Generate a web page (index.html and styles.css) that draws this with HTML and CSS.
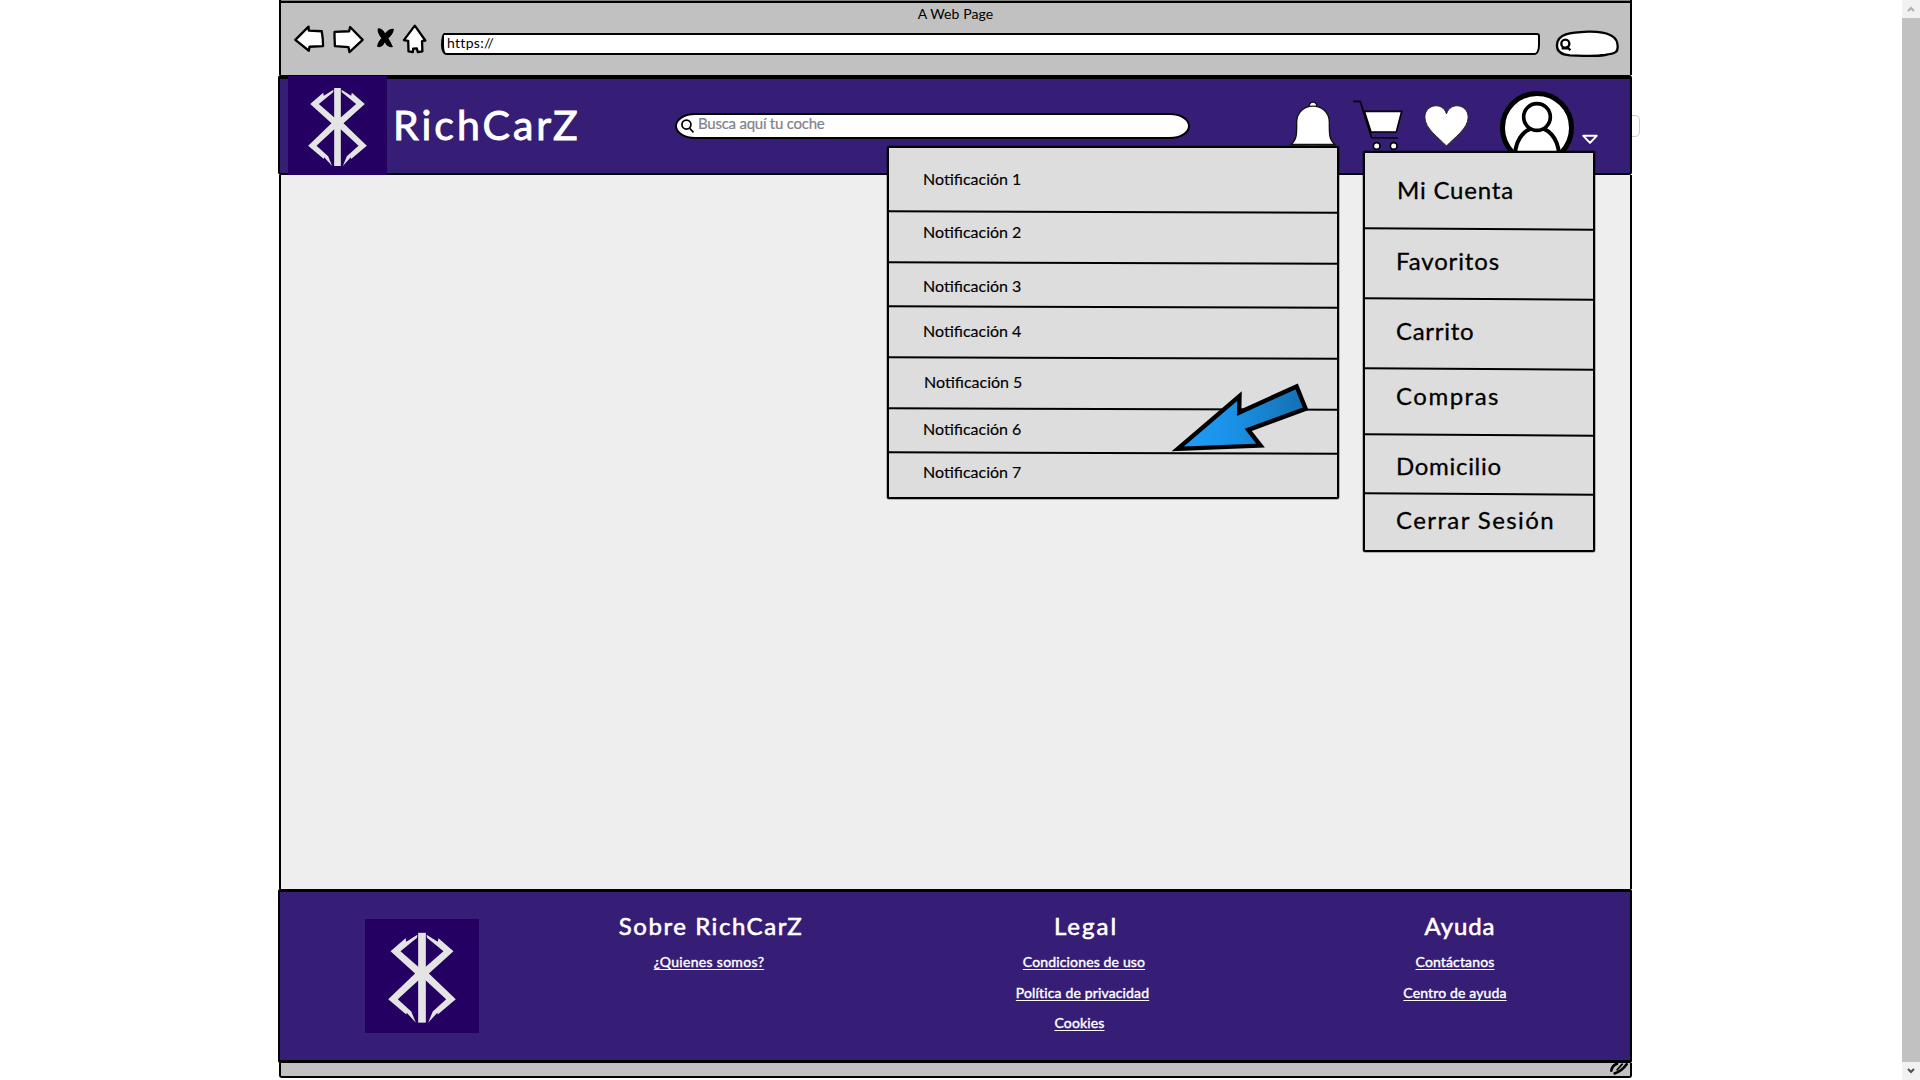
FILE: index.html
```html
<!DOCTYPE html>
<html lang="es">
<head>
<meta charset="utf-8">
<title>RichCarZ</title>
<link rel="stylesheet" href="styles.css">
</head>
<body>
<svg width="0" height="0" class="defs">
  <symbol id="rune" viewBox="24 18 296 297">
    <g fill="#e4e4e4">
      <rect x="162" y="54" width="20" height="234"/>
      <path d="M160 59L131 77L129 68L90 102L154 160L84 227L131 267L132 262L156 288L144 259L109 227L172 169V151L116 102L159 67Z"/>
      <path d="M160 59L131 77L129 68L90 102L154 160L84 227L131 267L132 262L156 288L144 259L109 227L172 169V151L116 102L159 67Z" transform="matrix(-1 0 0 1 344 0)"/>
    </g>
  </symbol>
</svg>
<div class="page">
  <div class="window">
    <div class="chrome">
      <div class="window-title">A Web Page</div>
      <div class="toolbar">
        <svg class="nav-icons" viewBox="0 0 405 100">
          <g fill="#fff" stroke="#000" stroke-width="7" stroke-linejoin="round">
            <path d="M2 48L42 8L43 20L82 22Q86 43 86 67L45 69L43 81Z"/>
            <path d="M121 24Q120 27 122 67L163 70L166 85L206 48L168 9L165 22Z"/>
            <path d="M364 5L331 49L344 51L345 83L358 85L359 75L370 74L373 85L387 83L386 52L396 50Z"/>
          </g>
          <path d="M252 13Q265 12 274 28Q287 13 301 15Q298 32 284 43Q291 54 298 70Q282 73 273 56Q264 74 250 69Q250 55 263 43Q249 27 252 13Z"/>
        </svg>
        <div class="url-bar">https://</div>
        <svg class="pill" viewBox="0 0 195 84">
          <path d="M6 45C7 12 45 7 100 5C165 4 188 22 188 48C189 68 180 70 150 75C115 80 80 77 45 76C20 74 5 65 6 45Z" fill="#fff" stroke="#000" stroke-width="7"/>
          <circle cx="31" cy="41" r="12" fill="none" stroke="#000" stroke-width="7"/>
          <path d="M35 49L46 61M20 55L40 55" stroke="#000" stroke-width="7"/>
        </svg>
      </div>
    </div>
    <header class="header">
      <div class="logo"><svg><use href="#rune"/></svg></div>
      <div class="brand">RichCarZ</div>
      <div class="search">
        <svg viewBox="0 0 12 14"><circle cx="5" cy="5.2" r="4.2"/><path d="M8 8.600L11.600 12.600"/></svg>
        <span>Busca aquí tu coche</span>
      </div>
      <div class="actions">
        <svg class="bell" viewBox="0 0 138 144">
          <path d="M54 134H84V146H54Z" fill="#aaa" stroke="#222" stroke-width="2"/>
          <path d="M57 20C57 -2 81 -2 81 20Z" fill="#fff" stroke="#111" stroke-width="4"/>
          <path d="M3 130C22 116 20 94 20 64C20 -1 118 -1 118 64C118 94 116 116 135 130Z" fill="#fff" stroke="#111" stroke-width="4"/>
        </svg>
        <svg class="cart" viewBox="0 0 150 150" fill="none" stroke="#000" stroke-width="5">
          <path d="M34 34H146L130 96H54Z" fill="#fff"/>
          <path d="M1 4L22 5L56 113L135 114" stroke-linejoin="round"/>
          <circle cx="71" cy="138" r="10" fill="#fff"/><circle cx="122" cy="138" r="10" fill="#fff"/>
        </svg>
        <svg class="heart" viewBox="0 0 136 128">
          <path d="M68 125C45 100 2 72 2 37C2 -2 56 -12 68 27C80 -12 134 -2 134 37C134 72 91 100 68 125Z" fill="#fff" stroke="#222" stroke-width="3"/>
        </svg>
        <svg class="avatar" viewBox="0 0 222 222">
          <circle cx="111" cy="111" r="104" fill="#fff"/>
          <path d="M45 190C52 84 170 84 177 190V215H45Z" fill="#fff" stroke="#000" stroke-width="12"/>
          <circle cx="111" cy="78" r="40" fill="#fff" stroke="#000" stroke-width="11"/>
          <circle cx="111" cy="111" r="103.500" fill="none" stroke="#000" stroke-width="15"/>
        </svg>
        <svg class="caret" viewBox="0 0 48 32"><path d="M4 5H44L24 26Z" fill="none" stroke="#fff" stroke-width="6" stroke-linejoin="round"/></svg>
      </div>
    </header>
    <main class="content"></main>
    <footer class="footer">
      <div class="footer-logo"><svg><use href="#rune"/></svg></div>
      <section class="col about">
        <h2>Sobre RichCarZ</h2>
        <a>¿Quienes somos?</a>
      </section>
      <section class="col legal">
        <h2>Legal</h2>
        <a>Condiciones de uso</a>
        <a class="privacy">Política de privacidad</a>
        <a class="cookies">Cookies</a>
      </section>
      <section class="col help">
        <h2>Ayuda</h2>
        <a>Contáctanos</a>
        <a>Centro de ayuda</a>
      </section>
    </footer>
    <div class="status">
      <svg viewBox="0 0 60 36"><path d="M4 23Q6 8 21 2M14 31Q34 26 50 4" fill="none" stroke="#000" stroke-width="8" stroke-linecap="round"/><path d="M20 22L38 2" stroke="#000" stroke-width="5"/></svg>
    </div>
    <div class="edge-tag"></div>
    <ul class="dropdown notifications">
      <li>Notificación 1</li>
      <li>Notificación 2</li>
      <li>Notificación 3</li>
      <li>Notificación 4</li>
      <li>Notificación 5</li>
      <li>Notificación 6</li>
      <li>Notificación 7</li>
    </ul>
    <ul class="dropdown account">
      <li>Mi Cuenta</li>
      <li>Favoritos</li>
      <li>Carrito</li>
      <li>Compras</li>
      <li>Domicilio</li>
      <li>Cerrar Sesión</li>
    </ul>
    <svg class="pointer" viewBox="0 0 410 206">
      <defs><linearGradient id="blue" x1="0" y1="0" x2="1" y2="0"><stop offset="0.100" stop-color="#1e9bf5"/><stop offset="0.450" stop-color="#1a90e5"/><stop offset="1" stop-color="#146fb0"/></linearGradient></defs>
      <path d="M20 197L205 39L204 88L376 10L403 77L231 140L268 187Z" fill="url(#blue)" stroke="#000" stroke-width="13"/>
    </svg>
  </div>
  <div class="scrollbar">
    <div class="sb-btn"><svg viewBox="0 0 8 6"><path d="M1 5L4 2L7 5" stroke="#b0b0b0"/></svg></div>
    <div class="sb-thumb"></div>
    <div class="sb-btn"><svg viewBox="0 0 8 6"><path d="M1 1L4 4L7 1" stroke="#505050"/></svg></div>
  </div>
</div>
</body>
</html>
```
FILE: styles.css
```css
* { box-sizing: border-box; }
body { margin: 0; background: #fff; color: #000; font-family: Lato, "Open Sans", sans-serif; overflow: hidden; }
svg { display: block; }
.defs { position: absolute; }
.page { height: 1080px; display: flex; justify-content: flex-end; }

.window { position: relative; width: 1354px; height: 1080px; margin-right: 270px; display: flex; flex-direction: column; white-space: nowrap; }
.chrome { height: 75px; margin-left: 1px; background: #c1c1c1; border: 2px solid #000; border-top: 0; border-bottom: 0; box-shadow: inset 0 1px #808580, inset 0 3px #000; padding-top: 3px; }
.window-title { height: 21px; text-align: center; font-size: 14px; line-height: 22px; letter-spacing: 0.100px; }
.toolbar { display: flex; align-items: flex-start; padding-left: 13px; }
.nav-icons { width: 135px; height: 33px; overflow: visible; }
.url-bar { width: 1099px; height: 22px; margin: 9px 0 0 12px; background: #fff; border: 2px solid #000; border-left-width: 3px; border-radius: 3px 3px 5px 5px / 12px 3px 10px 10px; font-size: 14px; line-height: 16px; padding-left: 3px; letter-spacing: 0.300px; }
.pill { width: 65px; height: 28px; margin: 6px 0 0 15px; }

.header { height: 100px; background: #361d75; border: 2px solid #000; border-top-width: 4px; border-radius: 3px; display: flex; }
.logo { width: 99px; height: 99px; margin: -3px 0 0 8px; background: #240062; }
.logo svg, .footer-logo svg { width: 100%; height: 100%; }
.brand { width: 280px; padding: 21px 0 0 6px; color: #fff; font-size: 41px; line-height: 50px; letter-spacing: 3.050px; -webkit-text-stroke: 0.900px #fff; }
.search { width: 515px; height: 26px; margin-top: 34px; margin-left: 8px; background: #fff; border: 2px solid #000; border-radius: 20px / 13px; display: flex; font-size: 15px; line-height: 17px; letter-spacing: -0.240px; color: #80828c; }
.search span { -webkit-text-stroke: 0.200px #80828c; }
.search svg { width: 13px; height: 15px; margin: 4px 4px 0 4px; fill: none; stroke: #000; stroke-width: 1.600; }
.actions { display: flex; margin-left: 100px; }
.bell { width: 46px; height: 48px; margin-top: 22px; }
.cart { width: 50px; height: 50px; margin: 21px 0 0 17px; }
.heart { width: 45px; height: 42px; margin: 26px 0 0 21px; }
.avatar { width: 74px; height: 74px; margin: 12px 0 0 31px; }
.caret { width: 16px; height: 11px; margin: 55px 0 0 8px; }

.content { height: 714px; margin-left: 1px; background: #eee; border: solid #000; border-width: 0 2px; }

.footer { height: 174px; background: #361d75; border: 2px solid #000; border-top-width: 3px; border-bottom-width: 3px; border-radius: 2px; display: flex; color: #fff; }
.footer-logo { width: 114px; height: 114px; margin: 27px 0 0 85px; background: #240062; }
.col { display: flex; flex-direction: column; align-items: center; padding-top: 18px; }
.col h2 { margin: 0 0 10px; font-weight: 400; font-size: 24px; line-height: 32px; -webkit-text-stroke: 0.600px #fff; }
.col a { font-size: 14px; line-height: 20px; margin-bottom: 11px; letter-spacing: 0.150px; -webkit-text-stroke: 0.400px #fff; text-decoration: underline; text-underline-offset: 2px; text-decoration-skip-ink: none; }
.about { width: 220px; margin-left: 120px; }
.about h2 { letter-spacing: 1.550px; margin-left: 4px; }
.about a { letter-spacing: 0.300px; }
.legal { width: 200px; margin-left: 165px; }
.legal h2 { letter-spacing: 2px; margin-left: 4px; }
.legal .privacy { margin-right: 3px; margin-bottom: 10px; }
.legal .cookies { margin-right: 9px; }
.help { width: 200px; margin-left: 171px; }
.help h2 { letter-spacing: 0.900px; margin-left: 10px; }

.status { height: 15px; margin-left: 1px; background: #c1c1c1; border: 2px solid #000; border-top: 0; border-radius: 0 0 3px 3px; display: flex; justify-content: flex-end; }
.status svg { width: 20px; height: 12px; }

.edge-tag { position: absolute; left: 1354px; top: 115px; width: 8px; height: 22px; background: #fff; border: 1px solid #ccc; border-left: 0; border-radius: 0 5px 5px 0; }

.dropdown { position: absolute; margin: 0; padding: 0; list-style: none; background: #ddd; border: 2px solid #000; border-radius: 2px; box-shadow: 0 0 0 0.500px rgba(0, 0, 0, 0.5); }
.dropdown li { position: relative; }
.dropdown li + li::before { content: ""; position: absolute; left: -1px; right: -1px; top: -0.500px; height: 2px; background: #000; transform: rotate(0.200deg); }
.notifications { left: 609px; top: 146px; width: 452px; height: 353px; font-size: 16px; line-height: 20px; -webkit-text-stroke: 0.150px #000; }
.notifications li { padding-left: 34px; }
.notifications li:nth-child(1) { height: 63px; padding-top: 21px; }
.notifications li:nth-child(2) { height: 51px; padding-top: 11px; }
.notifications li:nth-child(3) { height: 44px; padding-top: 14px; }
.notifications li:nth-child(4) { height: 51px; padding-top: 15px; }
.notifications li:nth-child(5) { height: 51px; padding: 15px 0 0 35px; }
.notifications li:nth-child(6) { height: 44px; padding-top: 11px; }
.notifications li:nth-child(7) { padding-top: 10px; }
.account { left: 1085px; top: 151px; width: 232px; height: 401px; font-size: 24px; line-height: 30px; -webkit-text-stroke: 0.300px #000; }
.account li { padding-left: 31px; }
.account li + li::before { transform: rotate(0.350deg); }
.account li:nth-child(1) { height: 75px; padding: 22px 0 0 32px; letter-spacing: 0.800px; }
.account li:nth-child(2) { height: 70px; padding-top: 18px; letter-spacing: 0.850px; }
.account li:nth-child(3) { height: 70px; padding-top: 18px; letter-spacing: 0.700px; }
.account li:nth-child(4) { height: 66px; padding-top: 13px; letter-spacing: 1.500px; }
.account li:nth-child(5) { height: 59px; padding-top: 17px; letter-spacing: 0.700px; }
.account li:nth-child(6) { padding-top: 12px; letter-spacing: 1.400px; }

.pointer { position: absolute; left: 893px; top: 383px; width: 137px; height: 69px; }

.scrollbar { width: 18px; display: flex; flex-direction: column; background: #f1f1f1; }
.sb-btn { height: 18px; display: flex; align-items: center; justify-content: center; }
.sb-btn svg { width: 8px; height: 6px; fill: none; stroke-width: 2; }
.sb-thumb { flex: 1; background: #c1c1c1; }
```
